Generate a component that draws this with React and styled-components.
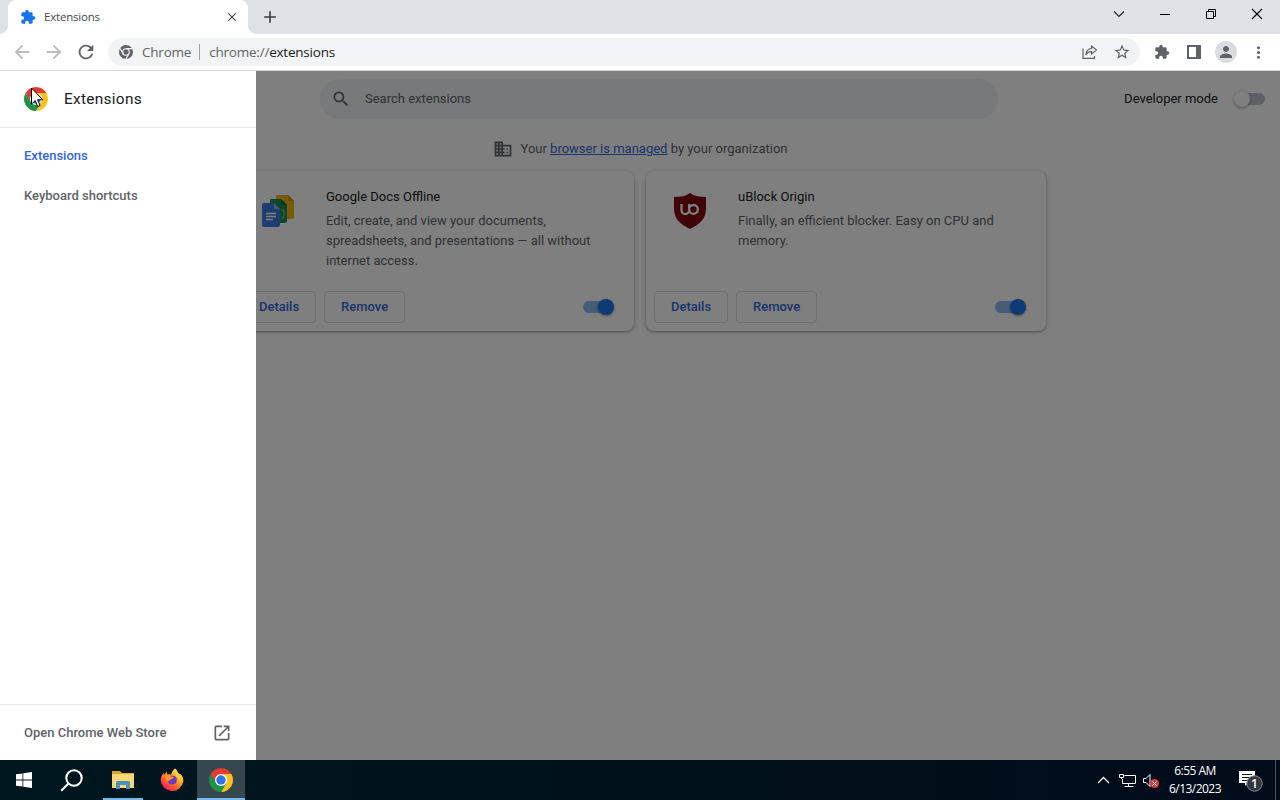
import React, { useState } from "react";
import styled, { createGlobalStyle } from "styled-components";
import {
  MdAdd,
  MdArrowBack,
  MdArrowForward,
  MdBusiness,
  MdClose,
  MdExtension,
  MdMoreVert,
  MdOpenInNew,
  MdPerson,
  MdRefresh,
  MdSearch,
  MdStarBorder
} from "react-icons/md";

const GlobalStyle = createGlobalStyle`
  * {
    box-sizing: border-box;
  }

  body {
    margin: 0;
    overflow: hidden;
    font-family: Roboto, "Liberation Sans", sans-serif;
    font-size: 13px;
    color: #202124;
  }

  svg {
    display: block;
    flex-shrink: 0;
  }
`;

/* desktop */
const Desktop = styled.div`
  width: 1280px;
  height: 800px;
  display: flex;
  flex-direction: column;
  overflow: hidden;
`;

/* browser frame */
const TabStrip = styled.div`
  height: 34px;
  display: flex;
  align-items: flex-start;
  padding-left: 8px;
  background: #dee1e6;
`;

const Tab = styled.div`
  position: relative;
  width: 240px;
  height: 34px;
  display: flex;
  align-items: center;
  padding: 0 9px 0 12px;
  border-radius: 8px 8px 0 0;
  background: #fff;
  font-family: "Open Sans", "Noto Sans", sans-serif;
  font-size: 11.5px;
  letter-spacing: -0.2px;
  color: #45484c;

  &::before,
  &::after {
    content: "";
    position: absolute;
    bottom: 0;
    width: 8px;
    height: 8px;
  }

  &::before {
    left: -8px;
    background: radial-gradient(circle at 0 0, #dee1e6 7.5px, #fff 8px);
  }

  &::after {
    right: -8px;
    background: radial-gradient(circle at 100% 0, #dee1e6 7.5px, #fff 8px);
  }
`;

const TabTitle = styled.span`
  flex: 1;
  margin-left: 8px;
  padding-bottom: 2px;
`;

const NewTab = styled.div`
  margin: 7px 0 0 12px;
  color: #3c4043;
`;

const WindowButtons = styled.div`
  margin-left: auto;
  display: flex;
`;

const WindowButton = styled.div`
  width: 46px;
  height: 28px;
  display: flex;
  align-items: center;
  justify-content: center;
`;

const Toolbar = styled.div`
  height: 37px;
  display: flex;
  align-items: center;
  padding: 0 6px 0 11px;
  background: #fff;
  border-bottom: 1px solid #d5d7da;
  color: #5f6368;
`;

const NavButton = styled.div`
  width: 22px;
  margin-right: 10px;
  display: flex;
  justify-content: center;
  color: ${props => (props.$disabled ? "#babcbe" : "#5f6368")};
`;

const Omnibox = styled.div`
  flex: 1;
  height: 28px;
  display: flex;
  align-items: center;
  margin-left: 1px;
  padding: 0 2px 0 11px;
  border-radius: 14px;
  background: #f1f3f4;
  font-family: "Open Sans", "Noto Sans", sans-serif;
  font-size: 13.5px;
  color: #5f6368;
`;

const Origin = styled.span`
  margin-left: 9px;
  padding-right: 8px;
  border-right: 1px solid #9aa0a6;
  letter-spacing: -0.22px;
  line-height: 16px;
`;

const Url = styled.span`
  flex: 1;
  margin-left: 9px;
  letter-spacing: -0.22px;
`;

const Strong = styled.span`
  color: #202124;
`;

const ToolbarIcons = styled.div`
  display: flex;
  margin-left: 6px;
`;

/* every toolbar icon on the right has a 32px slot */
const IconSlot = styled.div`
  width: 32px;
  height: 28px;
  display: flex;
  align-items: center;
  justify-content: center;
`;

const Avatar = styled.div`
  width: 22px;
  height: 22px;
  display: flex;
  align-items: center;
  justify-content: center;
  border-radius: 50%;
  background: #dadce0;
`;

/* page */
const Page = styled.main`
  position: relative;
  height: 689px;
  background: #fff;
`;

const PageHeader = styled.div`
  height: 56px;
  display: flex;
  align-items: center;
  padding: 0 15px 0 320px;
`;

const SearchBox = styled.div`
  width: 678px;
  height: 40px;
  display: flex;
  align-items: center;
  gap: 14px;
  padding-left: 11px;
  border-radius: 20px;
  background: #f1f3f4;
  color: #5f6368;
`;

const Label = styled.span`
  padding-bottom: 2px;
`;

const DevMode = styled.div`
  display: flex;
  align-items: center;
  gap: 17px;
  margin-left: auto;
`;

const Managed = styled.div`
  height: 43px;
  display: flex;
  align-items: center;
  justify-content: center;
  gap: 8px;
  color: #5f6368;
`;

const Link = styled.a`
  color: #3367d6;
  text-decoration: underline;
`;

const Cards = styled.div`
  display: grid;
  grid-template-columns: 400px 400px;
  gap: 12px;
  justify-content: center;
  padding-top: 1px;
`;

const Card = styled.article`
  height: 160px;
  display: flex;
  flex-direction: column;
  border-radius: 8px;
  background: #fff;
  box-shadow: 0 1px 2px rgba(60, 64, 67, 0.4), 0 1px 4px 1px rgba(60, 64, 67, 0.18);
`;

const CardBody = styled.div`
  flex: 1;
  display: flex;
  gap: 30px;
  padding: 16px 20px 0 26px;
`;

const CardIcon = styled.div`
  width: 36px;
  padding-top: 6px;
`;

const CardText = styled.div`
  width: 280px;
  line-height: 20px;
  color: #5f6368;
`;

const CardTitle = styled.div`
  margin-bottom: 4px;
  color: #202124;
`;

const CardActions = styled.div`
  display: flex;
  align-items: center;
  gap: 8px;
  padding: 0 20px 8px 8px;
`;

const Button = styled.button`
  height: 32px;
  padding: 0 16px 2px;
  border: 1px solid #dadce0;
  border-radius: 4px;
  background: none;
  font: 500 13px Roboto, sans-serif;
  color: #3367d6;
`;

const Toggle = styled.div`
  position: relative;
  width: ${props => (props.$on ? 31 : 30)}px;
  height: 16px;
  display: flex;
  align-items: center;
  justify-content: ${props => (props.$on ? "flex-start" : "flex-end")};
  margin-left: ${props => (props.$on ? "auto" : 0)};

  &::before {
    content: "";
    width: 28px;
    height: 12px;
    border-radius: 6px;
    background: ${props => (props.$on ? "#8cb8f2" : "#bdc1c6")};
  }

  &::after {
    content: "";
    position: absolute;
    top: 0;
    ${props => (props.$on ? "right: 0;" : "left: -1px;")}
    width: 16px;
    height: 16px;
    border-radius: 50%;
    background: ${props => (props.$on ? "#1a73e8" : "#fff")};
    box-shadow: 0 1px 3px rgba(0, 0, 0, 0.4);
  }
`;

/* drawer, sits over the page */
const Scrim = styled.div`
  position: absolute;
  inset: 0;
  background: rgba(0, 0, 0, 0.5);
`;

const Drawer = styled.aside`
  position: absolute;
  top: 0;
  bottom: 0;
  left: 0;
  width: 256px;
  display: flex;
  flex-direction: column;
  background: #fff;
  font-weight: 500;
  color: #5f6368;
`;

const DrawerHeader = styled.div`
  height: 57px;
  display: flex;
  align-items: center;
  gap: 16px;
  padding-left: 24px;
  border-bottom: 1px solid #e8eaed;
  font-size: 15.4px;
  font-weight: 400;
  letter-spacing: 0.3px;
  color: #202124;
`;

const DrawerNav = styled.nav`
  flex: 1;
  padding-top: 7px;
`;

const DrawerItem = styled.div`
  height: 40px;
  display: flex;
  align-items: center;
  padding-left: 24px;
  color: ${props => (props.$active ? "#3367d6" : "#5f6368")};
`;

const DrawerFooter = styled.div`
  height: 56px;
  display: flex;
  align-items: center;
  justify-content: space-between;
  padding: 0 24px;
  border-top: 1px solid #e8eaed;
`;

const Cursor = styled.svg`
  position: absolute;
  top: 16px;
  left: 31px;
`;

/* taskbar */
const Taskbar = styled.footer`
  height: 40px;
  display: flex;
  align-items: center;
  background: linear-gradient(90deg, #00171f, #00111a 50%, #020b1a);
  color: #fff;
`;

const Task = styled.div`
  width: ${props => props.$width || 48}px;
  height: 40px;
  display: flex;
  align-items: center;
  justify-content: center;
  margin-right: ${props => props.$gap || 0}px;
  background: ${props => (props.$active ? "#36474f" : "none")};
  box-shadow: ${props => (props.$open ? "inset 0 -2px #76b9ed" : "none")};
`;

const Tray = styled.div`
  height: 40px;
  margin-left: auto;
  display: flex;
  align-items: center;
`;

const TrayIcon = styled.div`
  margin-right: ${props => props.$gap}px;
`;

const Clock = styled.div`
  width: 54px;
  margin-right: 17px;
  font-family: "Open Sans", "Noto Sans", sans-serif;
  font-size: 12px;
  letter-spacing: -0.54px;
  line-height: 18px;
  text-align: center;
  white-space: nowrap;
`;

const ShowDesktop = styled.div`
  width: 5px;
  height: 40px;
  border-left: 1px solid #4b535d;
`;

const ChromeLogo = ({ size }) => (
  <svg width={size} height={size} viewBox="0 0 24 24">
    <path fill="#e33b2e" d="M22.39 6A12 12 0 0 0 1.61 6L6.8 15 12 12V6z" />
    <path fill="#fcc31e" d="M12 6h10.39A12 12 0 0 1 12 24l5.2-9L12 12z" />
    <path fill="#1e9247" d="M1.61 6A12 12 0 0 0 12 24l5.2-9-5.2-3-5.2 3z" />
    <circle cx="12" cy="12" r="6" fill="#fff" />
    <circle cx="12" cy="12" r="4.7" fill="#2f72e8" />
  </svg>
);

const ChromeMono = () => (
  <svg width="14" height="14" viewBox="0 0 24 24">
    <circle cx="12" cy="12" r="12" fill="#5f6368" />
    <g fill="none" stroke="#f1f3f4" strokeWidth="2">
      <circle cx="12" cy="12" r="5.6" />
      <path d="M12 6.2h11M7 15 1.5 5.5M17 15l-5.4 9.4" />
    </g>
  </svg>
);

const DocsIcon = () => (
  <svg width="36" height="36" viewBox="0 0 36 36">
    <path fill="#f2b50c" d="M16 2h12l6 6v16a2 2 0 0 1-2 2H16z" />
    <path fill="#ce9200" d="M28 2v6h6z" />
    <path fill="#149250" d="M10 6h11l6 6v16a2 2 0 0 1-2 2H10z" />
    <path fill="#0a6b38" d="M21 6v6h6z" />
    <path fill="none" stroke="#8fc4a6" d="M21 17h3v8h-3" />
    <path fill="#3f79dc" d="M4 10h10l6 6v16a2 2 0 0 1-2 2H4a2 2 0 0 1-2-2V12a2 2 0 0 1 2-2z" />
    <path fill="#8db3f1" d="M14 10v6h6z" />
    <path stroke="#fff" strokeWidth="1.4" d="M6 20.5h10M6 23.5h10M6 26.5h7" />
  </svg>
);

const UblockIcon = () => (
  <svg width="36" height="36" viewBox="0 0 36 36">
    <path
      fill="#800610"
      d="M18 0c4 3 10 4 16 4v11c0 11-6 16-16 21C8 31 2 26 2 15V4c6 0 12-1 16-4z"
    />
    <path
      fill="none"
      stroke="#fff"
      strokeWidth="2.3"
      d="M9.5 11v6.2a3.8 3.8 0 0 0 7.6 0V11M17.1 16.4a4.4 4.4 0 1 0 8.8 0 4.4 4.4 0 1 0-8.8 0"
    />
  </svg>
);

const FirefoxIcon = () => (
  <svg width="24" height="24" viewBox="0 0 24 24">
    <defs>
      <linearGradient id="fox" x1="0.85" y1="0.1" x2="0.2" y2="0.95">
        <stop offset="0" stopColor="#fff04a" />
        <stop offset="0.4" stopColor="#ff9b23" />
        <stop offset="0.75" stopColor="#ff4b38" />
        <stop offset="1" stopColor="#e91c67" />
      </linearGradient>
    </defs>
    <path
      fill="url(#fox)"
      d="M15 .6c2 1.5 2.6 3 3 4.4 1 .4 1.5.7 2 1.5l.6-.5C23 8.5 23.6 11 23.3 13.5A11.4 11.4 0 0 1 .7 12.6C.6 9.5 2 6.5 3.6 4.5L4 7.1 6.7 3.5l.6 2.9c1.2-.2 2.6 0 3.7.3C12 4 13 2 15 .6z"
    />
    <circle cx="12.3" cy="12" r="4.6" fill="#6a3bc2" />
    <path fill="#ff9226" d="M5 8c2-1.4 4.5-1 6.3.6l2.5.4c-.4 1.7-2.4 1.8-3.6 2.7-.7.6-1 1.8-2.5 1.8C6 12 5 10 5 8z" />
    <path fill="#ffd43b" d="M15.5 4.5c3.5 2 5.5 5.5 4.7 9.7-.4-2-1.2-3-2-3.7-.3-2.5-2-3.6-2.7-6z" />
  </svg>
);

const ExplorerIcon = () => (
  <svg width="22" height="20" viewBox="0 0 22 20">
    <path fill="#dca12f" d="M0 1h8l2 2h12v5H0z" />
    <path fill="#f8d775" d="M0 4h22v14H0z" />
    <path fill="#4a92be" d="M4 19v-6.5A1.5 1.5 0 0 1 5.5 11h11a1.5 1.5 0 0 1 1.5 1.5V19h-4v-4H8v4z" />
  </svg>
);

const extensions = [
  {
    name: "Google Docs Offline",
    text:
      "Edit, create, and view your documents, spreadsheets, and presentations — all without internet access.",
    icon: <DocsIcon />
  },
  {
    name: "uBlock Origin",
    text: "Finally, an efficient blocker. Easy on CPU and memory.",
    icon: <UblockIcon />
  }
];

function BrowserFrame() {
  return (
    <>
      <TabStrip>
        <Tab>
          <MdExtension size={16} color="#1a73e8" />
          <TabTitle>Extensions</TabTitle>
          <MdClose size={14} />
        </Tab>
        <NewTab>
          <MdAdd size={20} />
        </NewTab>
        <WindowButtons>
          <WindowButton>
            <svg width="12" height="8" fill="none" stroke="#222" strokeWidth="1.2">
              <path d="m1 1.5 5 5 5-5" />
            </svg>
          </WindowButton>
          <WindowButton>
            <svg width="10" height="2" fill="#000">
              <path d="M0 1h10v1H0z" />
            </svg>
          </WindowButton>
          <WindowButton>
            <svg width="12" height="12" fill="none" stroke="#000">
              <path d="M1.5 3.5h7v7h-7zM3.5 3.5v-2h7v7h-2" />
            </svg>
          </WindowButton>
          <WindowButton>
            <svg width="12" height="12" stroke="#000" strokeWidth="1.1">
              <path d="m1 1 10 10M11 1 1 11" />
            </svg>
          </WindowButton>
        </WindowButtons>
      </TabStrip>
      <Toolbar>
        <NavButton $disabled>
          <MdArrowBack size={22} />
        </NavButton>
        <NavButton $disabled>
          <MdArrowForward size={22} />
        </NavButton>
        <NavButton>
          <MdRefresh size={22} />
        </NavButton>
        <Omnibox>
          <ChromeMono />
          <Origin>Chrome</Origin>
          <Url>
            chrome://<Strong>extensions</Strong>
          </Url>
          <IconSlot>
            <svg width="16" height="16" fill="none" stroke="#5f6368" strokeWidth="1.2">
              <path d="M1 4.5v9.900h11.500V12M9.500 2l5 4-5 4V7.600C7 7.600 5 8.600 3.800 11 4.200 7 6.500 4.700 9.500 4.300z" />
            </svg>
          </IconSlot>
          <IconSlot>
            <MdStarBorder size={18} />
          </IconSlot>
        </Omnibox>
        <ToolbarIcons>
          <IconSlot>
            <MdExtension size={16} />
          </IconSlot>
          <IconSlot>
            <svg width="14" height="14" fill="#5f6368">
              <path fillRule="evenodd" d="M0 0h14v14H0zM2 2v10h7V2z" />
            </svg>
          </IconSlot>
          <IconSlot>
            <Avatar>
              <MdPerson size={18} />
            </Avatar>
          </IconSlot>
          <IconSlot>
            <MdMoreVert size={19} />
          </IconSlot>
        </ToolbarIcons>
      </Toolbar>
    </>
  );
}

function SideDrawer() {
  return (
    <Drawer>
      <DrawerHeader>
        <ChromeLogo size={24} />
        Extensions
      </DrawerHeader>
      <DrawerNav>
        <DrawerItem $active>Extensions</DrawerItem>
        <DrawerItem>Keyboard shortcuts</DrawerItem>
      </DrawerNav>
      <DrawerFooter>
        Open Chrome Web Store
        <MdOpenInNew size={20} />
      </DrawerFooter>
      <Cursor width="14" height="21" viewBox="0 0 14 21">
        <path
          fill="#fff"
          stroke="#000"
          d="M.5 1v16.2l3.7-3.6 2.5 5.9 2.4-1-2.5-5.7h5.2z"
        />
      </Cursor>
    </Drawer>
  );
}

function WindowsTaskbar() {
  return (
    <Taskbar>
      <Task>
        <svg width="16" height="16" fill="#fff">
          <path d="M0 2.3 6.5 1.4v6.1H0zM7.3 1.3 16 0v7.5H7.3zM0 8.4h6.5v6.2L0 13.7zM7.3 8.4H16V16l-8.7-1.3z" />
        </svg>
      </Task>
      <Task $gap={7}>
        <svg width="24" height="23" fill="none" stroke="#fff" strokeWidth="2">
          <circle cx="14" cy="9" r="7.7" />
          <path d="M8.7 14.3 1.2 21.8" />
        </svg>
      </Task>
      <Task $width={40} $gap={5} $open>
        <ExplorerIcon />
      </Task>
      <Task $gap={1}>
        <FirefoxIcon />
      </Task>
      <Task $active $open>
        <ChromeLogo size={24} />
      </Task>
      <Tray>
        <TrayIcon $gap={9}>
          <svg width="13" height="8" fill="none" stroke="#fff" strokeWidth="1.3">
            <path d="m1 7 5.5-5.5L12 7" />
          </svg>
        </TrayIcon>
        <TrayIcon $gap={7}>
          <svg width="17" height="15" fill="none" stroke="#fff">
            <path d="M5.5 2.5h11v8h-13V6M9.5 10.5v3M5.5 13.5h9M.5 1.5h4v3h-4zM2.5 4.5V6" />
          </svg>
        </TrayIcon>
        <TrayIcon $gap={8}>
          <svg width="17" height="17" fill="none" stroke="#fff">
            <path d="M.5 6.5H3l4-4v12l-4-4H.5z" />
            <circle cx="11.5" cy="11.5" r="4.5" fill="#d43c43" stroke="none" />
            <path d="m9.5 9.5 4 4m0-4-4 4" />
          </svg>
        </TrayIcon>
        <Clock>
          6:55 AM
          <br />
          6/13/2023
        </Clock>
        <TrayIcon $gap={11}>
          <svg width="25" height="24">
            <path fill="#fff" d="M0 3h16v12h-7l-3 3v-3H0z" />
            <path stroke="#08101d" d="M3 6.5h10M3 9.5h10M3 12.5h6" />
            <circle cx="15.5" cy="15.5" r="7.7" fill="#30373e" stroke="#8b8f93" />
            <text
              x="15.5"
              y="20"
              fill="#fff"
              fontSize="12"
              fontWeight="600"
              fontFamily="Open Sans"
              textAnchor="middle"
            >
              1
            </text>
          </svg>
        </TrayIcon>
        <ShowDesktop />
      </Tray>
    </Taskbar>
  );
}

function App() {
  /* drawer closes when the scrim is clicked */
  const [drawerOpen, setDrawerOpen] = useState(true);

  return (
    <Desktop>
      <GlobalStyle />
      <BrowserFrame />
      <Page>
        <PageHeader>
          <SearchBox>
            <MdSearch size={20} />
            <Label>Search extensions</Label>
          </SearchBox>
          <DevMode>
            <Label>Developer mode</Label>
            <Toggle />
          </DevMode>
        </PageHeader>
        <Managed>
          <MdBusiness size={20} />
          <span>
            Your <Link>browser is managed</Link> by your organization
          </span>
        </Managed>
        <Cards>
          {extensions.map(extension => (
            <Card key={extension.name}>
              <CardBody>
                <CardIcon>{extension.icon}</CardIcon>
                <CardText>
                  <CardTitle>{extension.name}</CardTitle>
                  {extension.text}
                </CardText>
              </CardBody>
              <CardActions>
                <Button>Details</Button>
                <Button>Remove</Button>
                <Toggle $on />
              </CardActions>
            </Card>
          ))}
        </Cards>
        {drawerOpen && (
          <>
            <Scrim onClick={() => setDrawerOpen(false)} />
            <SideDrawer />
          </>
        )}
      </Page>
      <WindowsTaskbar />
    </Desktop>
  );
}

export default App;
